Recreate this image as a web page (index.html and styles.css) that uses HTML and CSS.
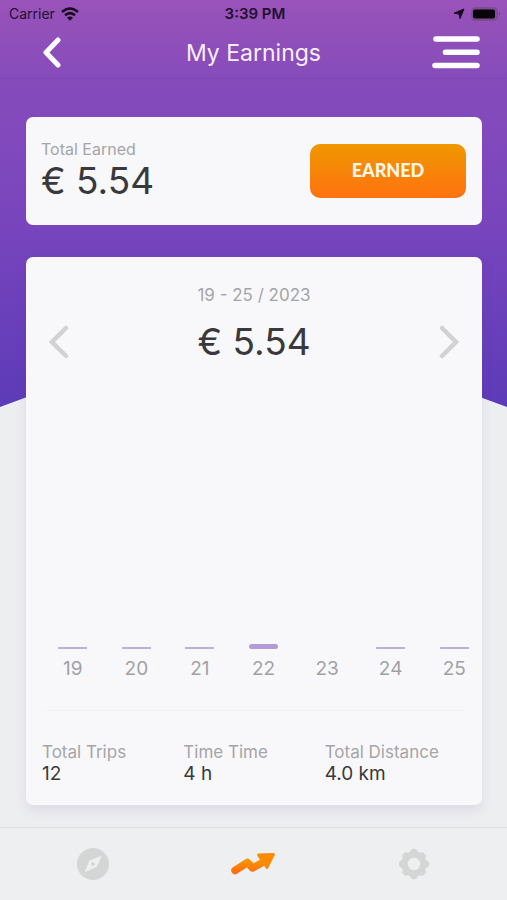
FILE: index.html
```html
<!DOCTYPE html>
<html lang="en">
<head>
<meta charset="utf-8">
<meta name="viewport" content="width=device-width, initial-scale=1">
<title>My Earnings</title>
<link rel="stylesheet" href="styles.css">
</head>
<body>
<div class="app">
  <svg class="backdrop" viewBox="0 0 507 407" preserveAspectRatio="none" aria-hidden="true">
    <defs><linearGradient id="sky" x1="0" y1="0" x2="0" y2="1"><stop offset="0" stop-color="#9a53b9"/><stop offset=".2" stop-color="#854bbb"/><stop offset=".5" stop-color="#7b46bd"/><stop offset="1" stop-color="#5d3bb8"/></linearGradient></defs>
    <path d="M0 0H507V407Q253 307 0 407Z" fill="url(#sky)"/>
  </svg>
  <div class="status">
    <div class="status-left">
      <span>Carrier</span>
      <svg width="18" height="14" viewBox="0 0 18 14" aria-hidden="true"><g fill="none" stroke="#160b20" stroke-width="2.6"><path d="M1 5Q9-2 17 5"/><path d="M4 8.3Q9 4 14 8.3"/></g><path d="M6 10.7Q9 8.3 12 10.7L9 13.8Z" fill="#160b20"/></svg>
    </div>
    <time class="clock">3:39 PM</time>
    <div class="status-right">
      <svg width="12" height="12" viewBox="0 0 12 12" aria-hidden="true"><path d="M11 1L7 10.500L6 6L1 5.200Z" fill="#160b20" stroke="#160b20" stroke-linejoin="round"/></svg>
      <svg width="30" height="14" viewBox="0 0 30 14" aria-hidden="true"><rect x=".5" y=".5" width="26" height="13" rx="4" fill="#7d4b96" stroke="#7d4b96"/><rect x="2" y="2.500" width="22" height="9" rx="2" fill="#080409"/><path d="M28 5Q30 7 28 9Z" fill="#6c3b88"/></svg>
    </div>
  </div>
  <header class="header">
    <button class="icon-button" aria-label="Back"><svg width="20" height="32" viewBox="0 0 20 32"><path d="M17 3L5 15.500L17 28" fill="none" stroke="#fff" stroke-width="5" stroke-linecap="round" stroke-linejoin="round"/></svg></button>
    <h1>My Earnings</h1>
    <button class="icon-button" aria-label="Menu"><svg width="50" height="34" viewBox="0 0 50 34"><path d="M5 3H46M14.500 16.200H46M4 29.500H46" stroke="#fff" stroke-width="5.600" stroke-linecap="round"/></svg></button>
  </header>
  <main>
    <section class="card total">
      <div>
        <div class="label">Total Earned</div>
        <div class="amount">€ 5.54</div>
      </div>
      <button class="earned">EARNED</button>
    </section>
    <section class="card week">
      <div class="range">19 - 25 / 2023</div>
      <div class="picker">
        <button class="icon-button" aria-label="Previous week"><svg width="20" height="34" viewBox="0 0 20 34"><path d="M17 3L3 17L17 31" fill="none" stroke="#d2d2d3" stroke-width="4.500" stroke-linecap="round"/></svg></button>
        <div class="amount">€ 5.54</div>
        <button class="icon-button" aria-label="Next week"><svg width="20" height="34" viewBox="0 0 20 34"><path d="M3 3L17 17L3 31" fill="none" stroke="#d2d2d3" stroke-width="4.500" stroke-linecap="round"/></svg></button>
      </div>
      <div class="chart">
        <div class="day"><i class="bar"></i><span>19</span></div>
        <div class="day"><i class="bar"></i><span>20</span></div>
        <div class="day"><i class="bar"></i><span>21</span></div>
        <div class="day"><i class="bar active"></i><span>22</span></div>
        <div class="day"><span>23</span></div>
        <div class="day"><i class="bar"></i><span>24</span></div>
        <div class="day"><i class="bar"></i><span>25</span></div>
      </div>
      <dl class="stats">
        <div><dt>Total Trips</dt><dd>12</dd></div>
        <div><dt>Time Time</dt><dd>4 h</dd></div>
        <div><dt>Total Distance</dt><dd>4.0 km</dd></div>
      </dl>
    </section>
  </main>
  <nav class="tabs">
    <a href="#explore" aria-label="Explore"><svg width="32" height="32" viewBox="0 0 32 32"><circle cx="16" cy="16" r="16" fill="#d4d5d5"/><path d="M25 7.500L19.500 19L7.500 24.500L12.500 12.500Z" fill="#eeeff0"/><circle cx="16" cy="16" r="1.700" fill="#d0d1d1"/></svg></a>
    <a href="#earnings" aria-label="Earnings" aria-current="page"><svg width="46" height="24" viewBox="0 0 46 24"><defs><linearGradient id="orange" x1="0" y1="0" x2="0" y2="1"><stop offset="0" stop-color="#f79500"/><stop offset="1" stop-color="#ff7210"/></linearGradient></defs><path d="M5 18.500L17.500 10.500L22.500 16L36 8.500" fill="none" stroke="url(#orange)" stroke-width="7.500" stroke-linecap="round" stroke-linejoin="round"/><path d="M28.500 3L43.500 2.300L37 15.500Z" fill="#f88c03" stroke="#f88c03" stroke-width="2.800" stroke-linejoin="round"/></svg></a>
    <a href="#settings" aria-label="Settings"><svg width="32" height="32" viewBox="0 0 32 32"><g stroke="#d4d5d5" stroke-width="7.500" stroke-linecap="round"><path d="M16 4.500V27.500M4.500 16H27.500M8.200 8.200L23.800 23.800M23.800 8.200L8.200 23.800"/></g><circle cx="16" cy="16" r="12.800" fill="#d4d5d5"/><circle cx="16" cy="16" r="6.200" fill="#eeeff0"/></svg></a>
  </nav>
</div>
</body>
</html>
```
FILE: styles.css
```css
* { box-sizing: border-box; }
body {
  margin: 0;
  background: #edeef0;
  color: #39393b;
  font-family: Inter, "Liberation Sans", sans-serif;
}
button { border: 0; font: inherit; cursor: pointer; }
svg { display: block; }
.app {
  position: relative;
  display: flex;
  flex-direction: column;
  min-height: 100vh;
}
.backdrop {
  position: absolute;
  top: 0;
  left: 0;
  z-index: -1;
  width: 100%;
  height: 407px;
}
.status {
  display: grid;
  grid-template-columns: 1fr auto 1fr;
  align-items: center;
  height: 27px;
  padding: 0 6px 0 9px;
  font-size: 14px;
  color: #21102f;
}
.status-left, .status-right { display: flex; align-items: center; gap: 6px; }
.status-right { justify-content: flex-end; }
.clock { font-size: 15px; font-weight: 600; }
.header {
  display: grid;
  grid-template-columns: 50px 1fr 50px;
  align-items: center;
  height: 52px;
  padding: 0 26px;
  border-bottom: 1px solid #7d48b4;
}
.header .icon-button { justify-self: center; }
.header h1 {
  margin: 0;
  color: #f7effb;
  font-size: 23px;
  font-weight: 400;
  text-align: center;
}
.icon-button { padding: 0; background: none; }
main {
  display: flex;
  flex: 1;
  flex-direction: column;
  gap: 32px;
  padding: 38px 25px 22px 26px;
}
.card {
  border-radius: 7px;
  background: #f8f8fb;
}
.total {
  display: flex;
  align-items: center;
  justify-content: space-between;
  height: 108px;
  padding: 0 16px 0 15px;
}
.label, .range, .stats dt { color: #a5a5a7; font-size: 17px; line-height: 20px; }
.label { font-size: 16px; }
.amount { font-size: 37px; line-height: 44px; }
.earned {
  width: 156px;
  height: 54px;
  padding: 0 0 2px;
  border-radius: 10px;
  background: linear-gradient(#ef9800, #ff7210);
  color: #fff8e8;
  font-family: Lato, sans-serif;
  font-size: 18px;
  font-weight: 900;
}
.week {
  display: flex;
  flex: 1;
  flex-direction: column;
  padding: 28px 16px 20px;
  box-shadow: 0 6px 12px #5537a81a;
}
.range { text-align: center; }
.picker {
  display: flex;
  align-items: center;
  justify-content: space-between;
  padding: 0 7px;
  margin-top: 15px;
}
.chart {
  display: grid;
  flex: 1;
  grid-template-columns: repeat(7, 1fr);
  margin: 0 -20px 0 -1px;
  padding-bottom: 28px;
}
.day {
  display: flex;
  flex-direction: column;
  align-items: center;
  justify-content: flex-end;
  color: #a1a1a3;
  font-size: 19px;
  line-height: 26px;
}
.bar {
  width: 29px;
  height: 2px;
  margin-bottom: 7px;
  background: #beb0dc;
}
.active {
  height: 5px;
  border-radius: 3px;
  background: #b49bd8;
}
.stats {
  display: grid;
  grid-template-columns: repeat(3, 1fr);
  margin: 0;
  padding-top: 31px;
  border-top: 1px solid #f3f3f6;
}
.stats dd { margin: 0; font-size: 19px; line-height: 23px; }
.tabs {
  display: grid;
  grid-template-columns: repeat(3, 1fr);
  height: 73px;
  padding: 0 13px;
  border-top: 1px solid #e0e1e4;
  background: #eeeff0;
}
.tabs a { display: grid; place-items: center; }
```
